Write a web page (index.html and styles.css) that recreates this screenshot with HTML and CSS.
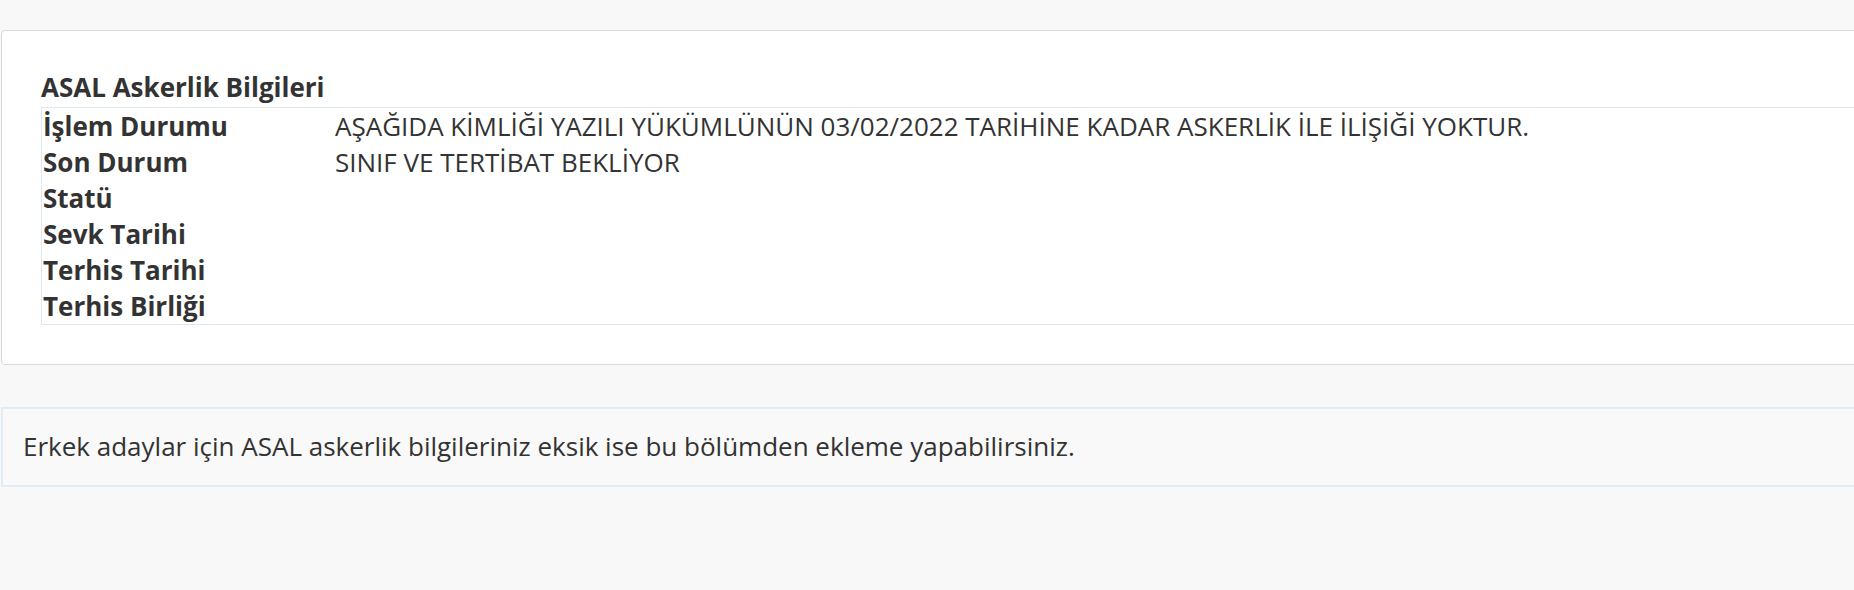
FILE: index.html
```html
<!DOCTYPE html>
<html lang="tr">
<head>
<meta charset="utf-8">
<link rel="stylesheet" href="styles.css">
</head>
<body>
<div class="page">
  <section class="card">
    <h3 class="card-title">ASAL Askerlik Bilgileri</h3>
    <table class="info-table">
      <tr><th>İşlem Durumu</th><td>AŞAĞIDA KİMLİĞİ YAZILI YÜKÜMLÜNÜN 03/02/2022 TARİHİNE KADAR ASKERLİK İLE İLİŞİĞİ YOKTUR.</td></tr>
      <tr><th>Son Durum</th><td>SINIF VE TERTİBAT BEKLİYOR</td></tr>
      <tr><th>Statü</th><td></td></tr>
      <tr><th>Sevk Tarihi</th><td></td></tr>
      <tr><th>Terhis Tarihi</th><td></td></tr>
      <tr><th>Terhis Birliği</th><td></td></tr>
    </table>
  </section>
  <div class="notice">Erkek adaylar için ASAL askerlik bilgileriniz eksik ise bu bölümden ekleme yapabilirsiniz.</div>
</div>
</body>
</html>
```

FILE: styles.css
```css
html, body {
  margin: 0;
  padding: 0;
  background: #f8f8f8;
  overflow: hidden;
}
body {
  font-family: "Open Sans", "Noto Sans", sans-serif;
  color: #333;
}
.page {
  padding-top: 30px;
  width: 1960px;
}
.card {
  margin-left: 1px;
  background: #fff;
  border: 1px solid #dadada;
  border-radius: 4px;
  padding: 40px 0 39px 39px;
}
.card-title {
  margin: 0 0 3px 0;
  font-size: 26px;
  line-height: 33px;
  font-weight: 700;
}
.info-table {
  width: 100%;
  border-collapse: collapse;
  border: 1px solid #dce8f4;
}
.info-table th,
.info-table td {
  padding: 0 0 0 1px;
  font-size: 26px;
  line-height: 36px;
  height: 36px;
  text-align: left;
  vertical-align: top;
}
.info-table th {
  width: 291px;
  font-weight: 700;
}
.info-table td {
  font-weight: 400;
}
.notice {
  margin-top: 42px;
  margin-left: 1px;
  background: #f9f9f9;
  border: 2px solid #e1ecf7;
  padding: 22px 20px 24px 20px;
  font-size: 26px;
  line-height: 30px;
}
```
